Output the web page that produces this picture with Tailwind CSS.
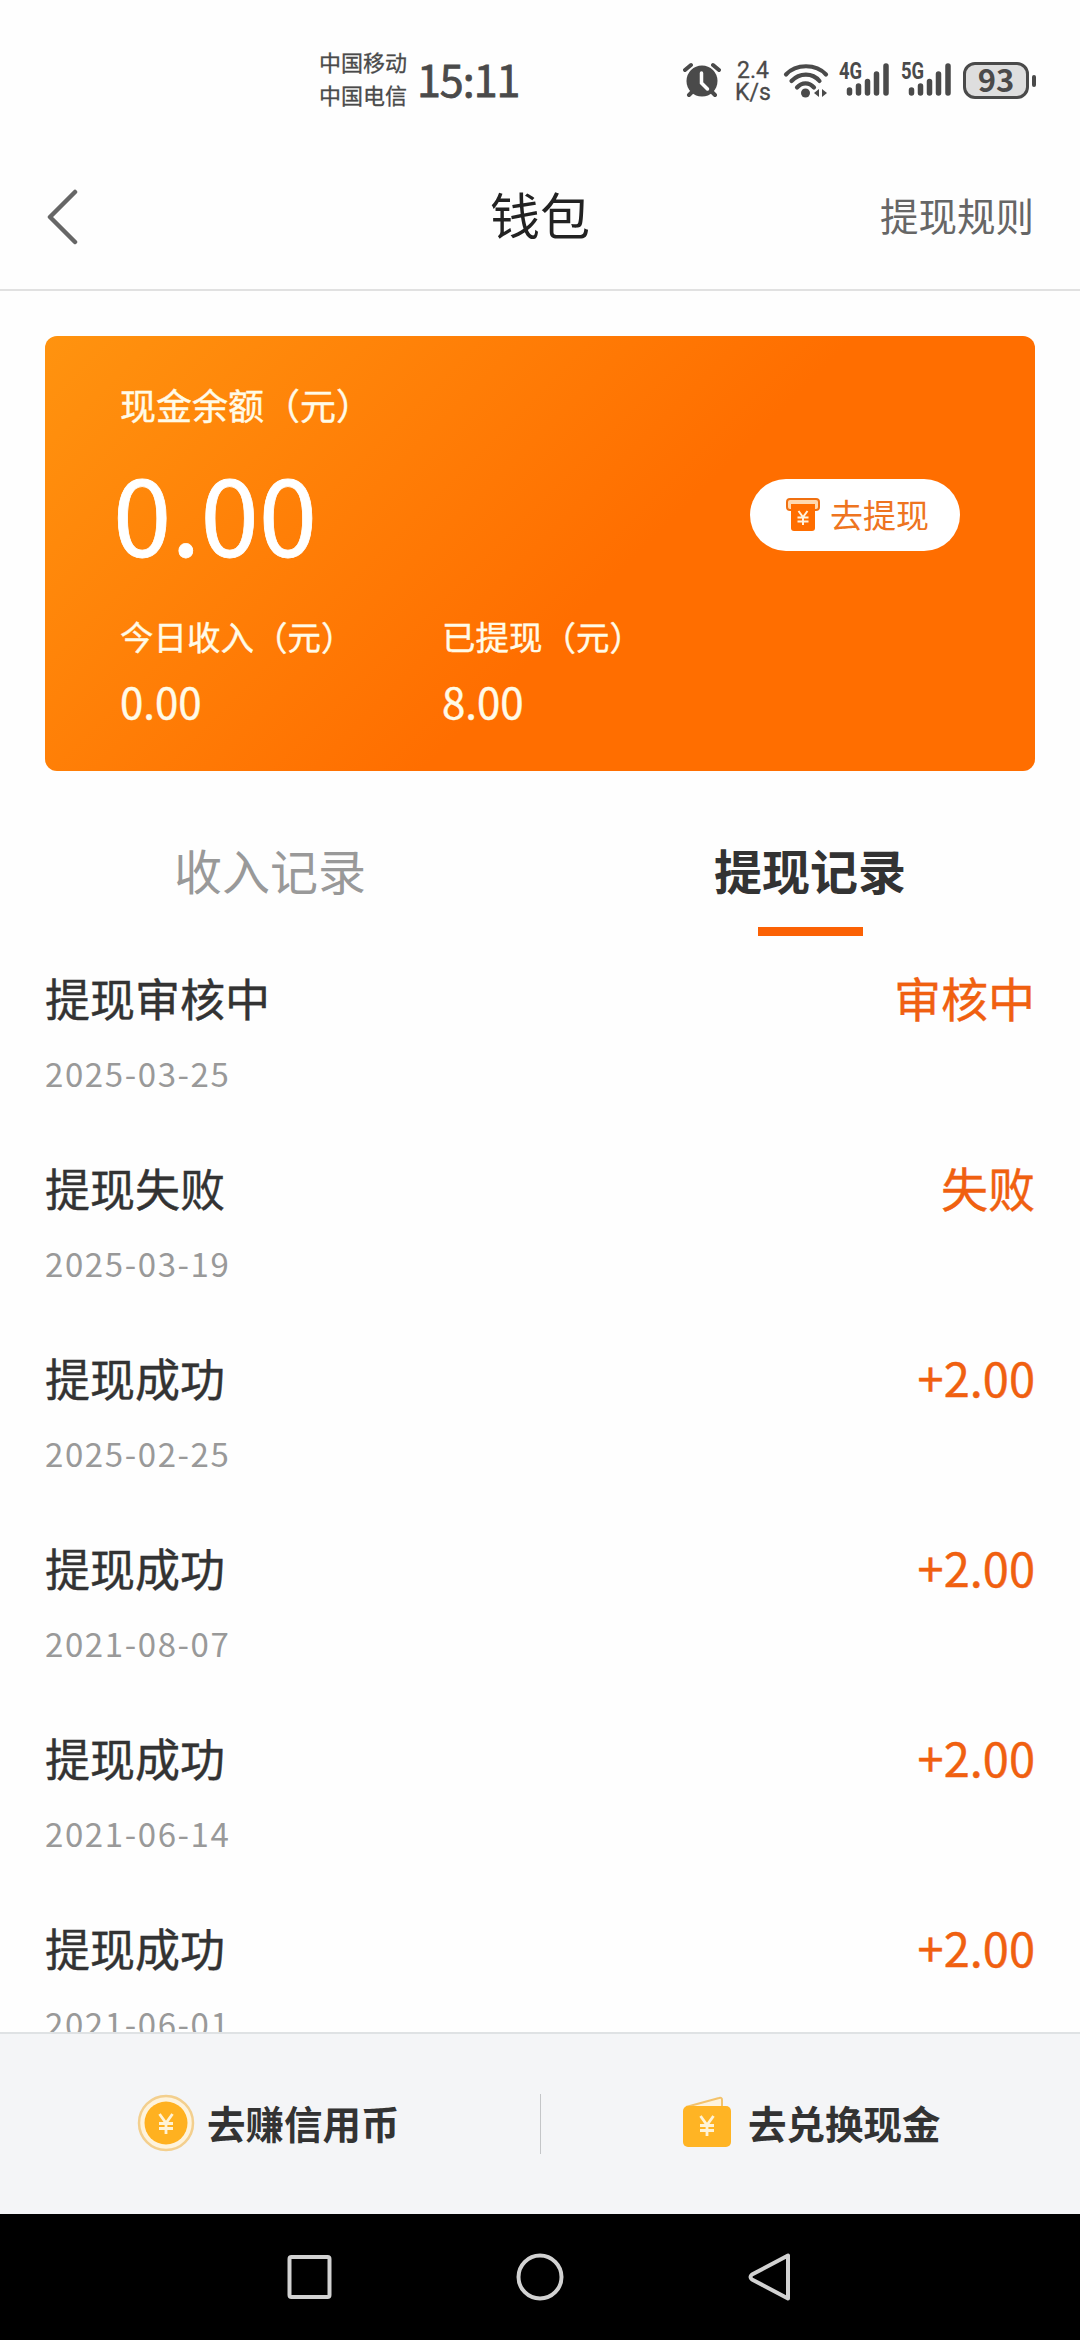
<!DOCTYPE html>
<html lang="zh-CN">
<head>
<meta charset="utf-8">
<title>钱包</title>
<script src="https://cdn.jsdelivr.net/npm/@tailwindcss/browser@4"></script>
</head>
<body class="bg-white">
<div class="flex h-[2340px] w-[1080px] flex-col overflow-hidden bg-[#fefefe] font-['Noto_Sans_CJK_SC',sans-serif] text-[#333333]">

  <!-- Status bar -->
  <header class="flex h-[144px] shrink-0 pl-[319px] pt-[45px] text-[#4a4a4a]">
    <div class="w-[98px] text-[22px] leading-[33px] [-webkit-text-stroke:0.3px]">
      <p>中国移动</p>
      <p>中国电信</p>
    </div>
    <p class="w-[266px] text-[43px] leading-[66px] tracking-[-1px] [-webkit-text-stroke:0.8px]">15:11</p>
    <svg class="mt-[17px] h-[36px] w-[38px]" viewBox="0 0 38 36" fill="none">
      <path d="M2 8 8 3M36 8 30 3M6 33l5-5M32 33l-5-5" stroke="#4a4a4a" stroke-width="4" stroke-linecap="round"/>
      <circle cx="19" cy="19" r="15.500" fill="#4a4a4a"/>
      <path d="M18.500 11v10l6 6" stroke="#fefefe" stroke-width="3.500" stroke-linecap="round"/>
    </svg>
    <div class="ml-[12px] mt-[15px] w-[40px] text-center font-[Roboto,sans-serif] text-[23px] leading-[22px] [-webkit-text-stroke:0.3px]">
      <p>2.4</p>
      <p>K/s</p>
    </div>
    <svg class="ml-[10px] mt-[17px] h-[36px] w-[46px]" viewBox="0 0 46 36" fill="none">
      <path d="M3 12.500c10-11 30-11 40 0M8.500 19c8-8.500 21-8.500 28 0M14 25.500c5-5.500 12-5.500 17 0" stroke="#4a4a4a" stroke-width="4.200" stroke-linecap="round"/>
      <circle cx="22.500" cy="31" r="4.500" fill="#4a4a4a"/>
      <path d="M36 27v8l-5-4zM39 27v8l5-4z" fill="#4a4a4a"/>
    </svg>
    <div class="relative ml-[10px] mt-[17px] h-[36px] w-[51px]">
      <span class="absolute left-0 top-px origin-left scale-x-[0.8] font-[Roboto,sans-serif] text-[23px] font-bold leading-[18px]">4G</span>
      <svg class="h-[36px] w-[51px]" viewBox="0 0 51 36"><path d="M10.500 28v3M19.500 24v7M28.500 19.500v11.500M37.500 12v19M47 4v27" stroke="#4a4a4a" stroke-width="5.500" stroke-linecap="round"/></svg>
    </div>
    <div class="relative ml-[11px] mt-[17px] h-[36px] w-[51px]">
      <span class="absolute left-0 top-px origin-left scale-x-[0.8] font-[Roboto,sans-serif] text-[23px] font-bold leading-[18px]">5G</span>
      <svg class="h-[36px] w-[51px]" viewBox="0 0 51 36"><path d="M10.500 28v3M19.500 24v7M28.500 19.500v11.500M37.500 12v19M47 4v27" stroke="#4a4a4a" stroke-width="5.500" stroke-linecap="round"/></svg>
    </div>
    <div class="ml-[11px] mt-[17px] flex h-[37px] items-center gap-[3px]">
      <div class="flex h-[37px] w-[66px] items-center justify-center rounded-[12px] border-[3px] border-[#4a4a4a] bg-[#dedede] pb-[3px] text-[31px] font-bold leading-[34px]">93</div>
      <div class="h-[12px] w-[4px] rounded-full bg-[#4a4a4a]"></div>
    </div>
  </header>

  <!-- Title bar -->
  <nav class="flex h-[147px] shrink-0 items-center border-b-2 border-[#e1e1e1] px-[46px]">
    <div class="flex-1">
      <svg class="h-[56px] w-[32px]" viewBox="0 0 32 56" fill="none"><path d="M29 3 4 28 29 53" stroke="#666" stroke-width="4.500" stroke-linecap="round" stroke-linejoin="round"/></svg>
    </div>
    <h1 class="mb-[8px] text-[50px] leading-[72px] text-[#222222]">钱包</h1>
    <p class="mb-[6px] flex-1 text-right text-[38.5px] leading-[56px] text-[#666666]">提现规则</p>
  </nav>

  <!-- Balance card -->
  <section class="mx-[45px] mt-[45px] flex h-[435px] shrink-0 flex-col rounded-[12px] bg-[linear-gradient(135deg,#ff930f_0%,#ff6e00_57%,#ff6e00_100%)] px-[75px] pt-[42px] text-[#fffbe8]">
    <p class="text-[36px] leading-[52px] [-webkit-text-stroke:0.4px]">现金余额（元）</p>
    <div class="mt-[8px] flex h-[146px] items-center justify-between">
      <p class="-ml-[7px] text-[105px] leading-[146px] text-white [-webkit-text-stroke:0.8px]">0.00</p>
      <div class="mt-[8px] flex h-[72px] w-[210px] items-center rounded-full bg-white pl-[36px] text-[#ee7420]">
        <svg class="h-[34px] w-[34px]" viewBox="0 0 34 34" fill="none">
          <rect x="1" y="1" width="32" height="11" rx="3" fill="#ffd9b0" stroke="#f07010" stroke-width="2"/>
          <path d="M5 6h24v24a3 3 0 0 1-3 3H8a3 3 0 0 1-3-3z" fill="#ff6e00"/>
          <path d="m12.500 13 4.500 6 4.500-6M17 19v8M11.500 19.500h11M11.500 23.500h11" stroke="#fff3df" stroke-width="2"/>
        </svg>
        <span class="mb-[3px] ml-[10px] text-[33px] leading-[48px]">去提现</span>
      </div>
    </div>
    <div class="mt-[27px] grid grid-cols-[322px_1fr] [-webkit-text-stroke:0.4px]">
      <p class="text-[33.5px] leading-[50px]">今日收入（元）</p>
      <p class="text-[33.5px] leading-[50px]">已提现（元）</p>
      <p class="mt-[10px] text-[42px] leading-[60px]">0.00</p>
      <p class="mt-[10px] text-[42px] leading-[60px]">8.00</p>
    </div>
  </section>

  <!-- Tabs -->
  <div class="mt-[63px] grid h-[102px] shrink-0 grid-cols-2 text-center text-[48px] leading-[70px]">
    <p class="text-[#999999]">收入记录</p>
    <div class="flex flex-col items-center">
      <p class="font-bold">提现记录</p>
      <div class="mt-[23px] h-[9px] w-[105px] bg-[#fb6104]"></div>
    </div>
  </div>

  <!-- Records -->
  <main class="flex min-h-0 flex-1 flex-col overflow-hidden px-[45px] pt-[27px]">
    <article class="h-[190px] shrink-0">
      <div class="flex h-[70px] items-center justify-between [-webkit-text-stroke:0.4px]"><h2 class="text-[45px]">提现审核中</h2><span class="mb-[2px] text-[47px] text-[#f06010]">审核中</span></div>
      <p class="mt-[15px] text-[33px] leading-[50px] tracking-[1.6px] text-[#999999]">2025-03-25</p>
    </article>
    <article class="h-[190px] shrink-0">
      <div class="flex h-[70px] items-center justify-between [-webkit-text-stroke:0.4px]"><h2 class="text-[45px]">提现失败</h2><span class="mb-[2px] text-[47px] text-[#f06010]">失败</span></div>
      <p class="mt-[15px] text-[33px] leading-[50px] tracking-[1.6px] text-[#999999]">2025-03-19</p>
    </article>
    <article class="h-[190px] shrink-0">
      <div class="flex h-[70px] items-center justify-between [-webkit-text-stroke:0.4px]"><h2 class="text-[45px]">提现成功</h2><span class="mb-[2px] text-[47px] text-[#f06010]">+2.00</span></div>
      <p class="mt-[15px] text-[33px] leading-[50px] tracking-[1.6px] text-[#999999]">2025-02-25</p>
    </article>
    <article class="h-[190px] shrink-0">
      <div class="flex h-[70px] items-center justify-between [-webkit-text-stroke:0.4px]"><h2 class="text-[45px]">提现成功</h2><span class="mb-[2px] text-[47px] text-[#f06010]">+2.00</span></div>
      <p class="mt-[15px] text-[33px] leading-[50px] tracking-[1.6px] text-[#999999]">2021-08-07</p>
    </article>
    <article class="h-[190px] shrink-0">
      <div class="flex h-[70px] items-center justify-between [-webkit-text-stroke:0.4px]"><h2 class="text-[45px]">提现成功</h2><span class="mb-[2px] text-[47px] text-[#f06010]">+2.00</span></div>
      <p class="mt-[15px] text-[33px] leading-[50px] tracking-[1.6px] text-[#999999]">2021-06-14</p>
    </article>
    <article class="h-[190px] shrink-0">
      <div class="flex h-[70px] items-center justify-between [-webkit-text-stroke:0.4px]"><h2 class="text-[45px]">提现成功</h2><span class="mb-[2px] text-[47px] text-[#f06010]">+2.00</span></div>
      <p class="mt-[15px] text-[33px] leading-[50px] tracking-[1.6px] text-[#999999]">2021-06-01</p>
    </article>
  </main>

  <!-- Bottom actions -->
  <footer class="flex h-[182px] shrink-0 items-center border-t-2 border-[#dfe2e4] bg-[#f4f5f7] text-[38.5px] font-bold leading-[58px]">
    <div class="flex w-[540px] items-center pl-[137px]">
      <svg class="mb-[2px] h-[58px] w-[58px]" viewBox="0 0 58 58" fill="none">
        <circle cx="29" cy="29" r="27" fill="#fef3dc" stroke="#f3cf8e" stroke-width="2.500"/>
        <circle cx="29" cy="29" r="21.500" fill="#ffb120"/>
        <path d="m22.500 20 6.500 9 6.500-9M29 29v11M22 29.500h14M22 34.500h14" stroke="#fff3d6" stroke-width="2.800"/>
      </svg>
      <span class="mb-[4px] ml-[12px]">去赚信用币</span>
    </div>
    <div class="h-[60px] w-px bg-[#c4c6c8]"></div>
    <div class="flex w-[539px] items-center pl-[141px]">
      <svg class="mb-[5px] h-[52px] w-[50px]" viewBox="0 0 50 52" fill="none">
        <path d="M4 11 37 2q3-1 3 2v8" fill="#fef3dc" stroke="#f3c26b" stroke-width="2"/>
        <rect x="1" y="10" width="48" height="41" rx="5" fill="#ffb424"/>
        <path d="m18.500 20 6.500 9 6.500-9M25 29v11M18 29.500h14M18 34.500h14" stroke="#fff3d6" stroke-width="2.800"/>
      </svg>
      <span class="mb-[4px] ml-[16px]">去兑换现金</span>
    </div>
  </footer>

  <!-- System navigation -->
  <div class="flex h-[126px] shrink-0 items-center justify-between bg-black px-[284px]">
    <svg class="h-[50px] w-[50px]" viewBox="0 0 50 50" fill="none"><rect x="5.500" y="5" width="40" height="40" rx="2" stroke="#d2d2d2" stroke-width="4"/></svg>
    <svg class="h-[50px] w-[50px]" viewBox="0 0 50 50" fill="none"><circle cx="25" cy="25" r="21.500" stroke="#d2d2d2" stroke-width="4"/></svg>
    <svg class="h-[50px] w-[50px]" viewBox="0 0 50 50" fill="none"><path d="M42 3.500v43L6 27.500q-3-2.500 0-5z" stroke="#d2d2d2" stroke-width="4" stroke-linejoin="round"/></svg>
  </div>
</div>
</body>
</html>
